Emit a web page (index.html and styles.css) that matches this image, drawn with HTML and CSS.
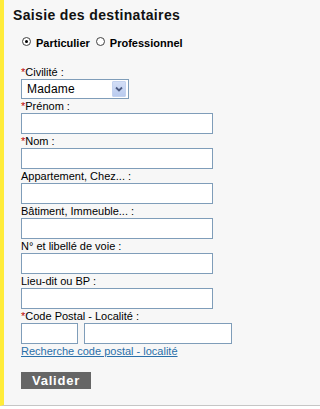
FILE: index.html
```html
<!DOCTYPE html>
<html lang="fr">
<head>
<meta charset="utf-8">
<title>Saisie des destinataires</title>
<link rel="stylesheet" href="styles.css">
</head>
<body>
<div class="panel">
  <h2 class="title">Saisie des destinataires</h2>
  <div class="radios">
    <label class="opt"><input type="radio" name="type" class="radio" checked>Particulier</label>
    <label class="opt"><input type="radio" name="type" class="radio">Professionnel</label>
  </div>
  <form class="form">
    <label class="lbl"><span class="req">*</span>Civilité :</label>
    <div class="select">
      <span class="select-val">Madame</span>
      <span class="select-btn">
        <svg width="8" height="6" viewBox="0 0 8 6"><path d="M1 1.5 L4 4.5 L7 1.5" fill="none" stroke="#4c5b82" stroke-width="1.8"/></svg>
      </span>
    </div>
    <label class="lbl"><span class="req">*</span>Prénom :</label>
    <input class="field" type="text">
    <label class="lbl"><span class="req">*</span>Nom :</label>
    <input class="field" type="text">
    <label class="lbl">Appartement, Chez... :</label>
    <input class="field" type="text">
    <label class="lbl">Bâtiment, Immeuble... :</label>
    <input class="field" type="text">
    <label class="lbl">N° et libellé de voie :</label>
    <input class="field" type="text">
    <label class="lbl">Lieu-dit ou BP :</label>
    <input class="field" type="text">
    <label class="lbl"><span class="req">*</span>Code Postal - Localité :</label>
    <div class="cp-row">
      <input class="field cp" type="text">
      <input class="field city" type="text">
    </div>
    <a class="link" href="#">Recherche code postal - localité</a>
    <button class="submit" type="button">Valider</button>
  </form>
</div>
</body>
</html>
```

FILE: styles.css
```css
html, body {
  margin: 0;
  padding: 0;
  background: #ffffff;
}
body {
  font-family: "Liberation Sans", Arial, sans-serif;
  color: #000;
}
.panel {
  box-sizing: border-box;
  width: auto;
  min-width: 265px;
  height: 406px;
  padding-top: 7px;
  background: #f7f7f7;
  border-left: 4px solid #ffec3a;
  border-bottom: 1px solid #c6c6c6;
}
.title {
  margin: 0;
  padding-left: 9px;
  font-size: 14px;
  line-height: 16px;
  font-weight: bold;
  letter-spacing: 0.35px;
  color: #111;
}
.radios {
  display: flex;
  margin-top: 14px;
  padding-left: 18px;
  font-size: 11px;
  line-height: 13px;
  font-weight: bold;
}
.opt {
  display: flex;
  align-items: flex-start;
  margin-right: 6px;
}
.radio {
  appearance: none;
  -webkit-appearance: none;
  box-sizing: border-box;
  width: 9px;
  height: 9px;
  margin: 0 5px 0 0;
  border: 1px solid #444;
  border-radius: 50%;
  background: radial-gradient(circle, #fff 55%, #e4e4e4 100%);
  position: relative;
}
.radio:checked::after {
  content: "";
  position: absolute;
  left: 2px;
  top: 2px;
  width: 3px;
  height: 3px;
  border-radius: 50%;
  background: #000;
}
.form {
  display: flex;
  flex-direction: column;
  align-items: flex-start;
  margin: 15px 0 0 0;
  padding-left: 17px;
}
.lbl {
  display: block;
  font-size: 11px;
  line-height: 14px;
  height: 14px;
}
.req {
  color: #c00000;
}
.select {
  box-sizing: border-box;
  display: flex;
  align-items: center;
  justify-content: space-between;
  width: 108px;
  height: 20px;
  border: 1px solid #7f9db9;
  background: #fff;
}
.select-val {
  padding-left: 5px;
  font-size: 12px;
  letter-spacing: 0.2px;
  line-height: 18px;
}
.select-btn {
  box-sizing: border-box;
  display: flex;
  align-items: center;
  justify-content: center;
  width: 14px;
  height: 16px;
  margin-right: 2px;
  background: linear-gradient(#d3def6, #b9cbef);
  border: 1px solid #c3d2ef;
  border-radius: 1px;
}
.field {
  box-sizing: border-box;
  display: block;
  width: 192px;
  height: 21px;
  margin: 0;
  padding: 0 2px;
  border: 1px solid #7f9db9;
  background: #fff;
  font-size: 11px;
}
.cp-row {
  display: flex;
  gap: 6px;
}
.field.cp {
  width: 57px;
}
.field.city {
  width: 148px;
}
.link {
  display: block;
  font-size: 11px;
  line-height: 14px;
  color: #2a6fa9;
  text-decoration: underline;
}
.submit {
  box-sizing: border-box;
  margin-top: 14px;
  width: 70px;
  height: 17px;
  padding: 0;
  border: none;
  background: #666666;
  color: #fff;
  font-family: "Liberation Sans", Arial, sans-serif;
  font-size: 13px;
  font-weight: bold;
  letter-spacing: 0.8px;
  line-height: 17px;
  text-align: center;
}
```
